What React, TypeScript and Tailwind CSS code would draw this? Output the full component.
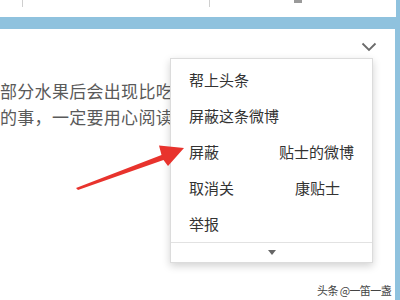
import React from "react";

const menuItems: React.ReactNode[] = [
  <span>帮上头条</span>,
  <span>屏蔽这条微博</span>,
  <span className="flex">
    <span>屏蔽</span>
    <span className="ml-[60px]">贴士的微博</span>
  </span>,
  <span className="flex">
    <span>取消关</span>
    <span className="ml-[61px]">康贴士</span>
  </span>,
  <span>举报</span>,
];

export default function App() {
  return (
    <div
      className="relative w-[400px] h-[300px] overflow-hidden bg-[#8fc2de] flex flex-col"
      style={{ fontFamily: '"Noto Sans CJK SC", "Noto Sans", sans-serif' }}
    >
      {/* top panel */}
      <div className="relative h-[17px] w-[396px] bg-white shrink-0">
        <div className="absolute left-[22px] top-0 h-[7px] w-px bg-[#cfcfcf]" />
        <div className="absolute left-[209px] top-0 h-[7px] w-px bg-[#cfcfcf]" />
        <div className="absolute left-[294px] top-0 h-[3px] w-[8px] bg-[#9a9a9a]" />
      </div>
      <div className="h-[12px] shrink-0" />
      {/* main panel */}
      <div className="relative w-[395px] flex-1 bg-white">
        {/* chevron */}
        <svg
          className="absolute left-[361px] top-[13px]"
          width="16"
          height="10"
          viewBox="0 0 16 10"
        >
          <path d="M1.5 1.5 L8 8 L14.5 1.5" fill="none" stroke="#6b6b6b" strokeWidth="1.8" />
        </svg>
        {/* body text */}
        <div className="pt-[49px] text-[17px] leading-[26px] tracking-[0.3px] text-[#5a5a5a] whitespace-nowrap">
          <div>部分水果后会出现比吃</div>
          <div>的事，一定要用心阅读</div>
        </div>
      </div>

      {/* dropdown menu */}
      <div className="absolute left-[170px] top-[58px] w-[203px] h-[205px] bg-white border border-[#dcdcdc] shadow-[0_3px_8px_rgba(0,0,0,0.18)] flex flex-col">
        <div className="pt-[3px]">
          {menuItems.map((it, i) => (
            <div
              key={i}
              className="h-[36px] flex items-center pl-[18px] text-[15px] text-[#333]"
            >
              {it}
            </div>
          ))}
        </div>
        <div className="border-t border-[#e2e2e2] flex-1 flex items-center justify-center">
          <svg width="8" height="5" viewBox="0 0 8 5">
            <path d="M0 0 L8 0 L4 5 Z" fill="#666" />
          </svg>
        </div>
      </div>

      {/* red arrow */}
      <svg className="absolute left-0 top-0" width="400" height="300" viewBox="0 0 400 300">
        <polygon
          points="76,188 161.5,155 159,145.5 184,148 168,166 163.5,160 78,190"
          fill="#e8332d"
        />
      </svg>

      {/* watermark */}
      <div className="absolute left-[317px] top-[283px] text-[11px] leading-[14px] tracking-[-0.6px] text-[#444] whitespace-nowrap">
        头条 @一笛一盏
      </div>
    </div>
  );
}
